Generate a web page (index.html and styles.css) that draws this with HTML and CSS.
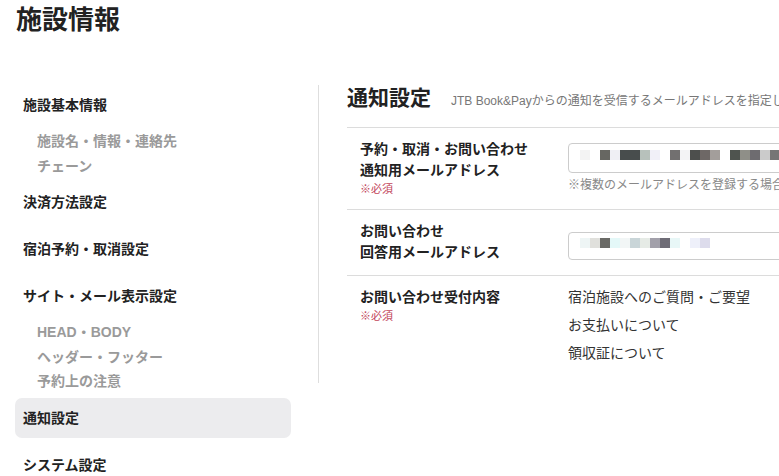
FILE: index.html
```html
<!DOCTYPE html>
<html lang="ja">
<head>
<meta charset="UTF-8">
<meta name="viewport" content="width=device-width, initial-scale=1.0">
<title>施設情報</title>
<link rel="stylesheet" href="styles.css">
</head>
<body>
  <h1 class="page-title">施設情報</h1>
  <div class="layout">
    <nav class="sidebar">
      <div class="nav-item">施設基本情報</div>
      <ul class="sub-list">
        <li>施設名・情報・連絡先</li>
        <li>チェーン</li>
      </ul>
      <div class="nav-item">決済方法設定</div>
      <div class="nav-item">宿泊予約・取消設定</div>
      <div class="nav-item">サイト・メール表示設定</div>
      <ul class="sub-list">
        <li>HEAD・BODY</li>
        <li>ヘッダー・フッター</li>
        <li>予約上の注意</li>
      </ul>
      <div class="nav-item active">通知設定</div>
      <div class="nav-item">システム設定</div>
    </nav>

    <main class="content">
      <div class="content-head">
        <h2>通知設定</h2>
        <p>JTB Book&amp;Payからの通知を受信するメールアドレスを指定してください。</p>
      </div>

      <div class="form-row">
        <div class="row-label">
          予約・取消・お問い合わせ<br>通知用メールアドレス
          <span class="required">※必須</span>
        </div>
        <div class="row-field">
          <div class="email-box first">
            <!-- 伏せ字（モザイク） -->
            <svg width="400" height="28" viewBox="0 0 400 28">
              <rect x="11" y="6" width="10" height="10" fill="#f3f3f3"/>
              <rect x="31" y="6" width="10" height="10" fill="#676762"/>
              <rect x="41" y="6" width="10" height="10" fill="#efeff4"/>
              <rect x="51" y="6" width="20" height="10" fill="#484d4d"/>
              <rect x="71" y="6" width="10" height="10" fill="#b7c1bb"/>
              <rect x="81" y="6" width="10" height="10" fill="#f1f0f8"/>
              <rect x="101" y="6" width="10" height="10" fill="#727070"/>
              <rect x="111" y="6" width="10" height="10" fill="#f3f3f5"/>
              <rect x="121" y="6" width="10" height="10" fill="#4d4f4d"/>
              <rect x="131" y="6" width="10" height="10" fill="#6e6866"/>
              <rect x="141" y="6" width="10" height="10" fill="#a39e9b"/>
              <rect x="161" y="6" width="10" height="10" fill="#4f544f"/>
              <rect x="171" y="6" width="10" height="10" fill="#8f8f88"/>
              <rect x="181" y="6" width="10" height="10" fill="#6e6c70"/>
              <rect x="191" y="6" width="10" height="10" fill="#cbcbcb"/>
              <rect x="201" y="6" width="10" height="10" fill="#767676"/>
            </svg>
          </div>
          <p class="note">※複数のメールアドレスを登録する場合は、カンマ区切りで入力してください。</p>
        </div>
      </div>

      <div class="form-row">
        <div class="row-label">
          お問い合わせ<br>回答用メールアドレス
        </div>
        <div class="row-field">
          <div class="email-box second">
            <svg width="400" height="26" viewBox="0 0 400 26">
              <rect x="11" y="5" width="10" height="10" fill="#eef5f5"/>
              <rect x="21" y="5" width="10" height="10" fill="#e0e0dc"/>
              <rect x="31" y="5" width="10" height="10" fill="#6a6a66"/>
              <rect x="41" y="5" width="10" height="10" fill="#e4f8f8"/>
              <rect x="51" y="5" width="10" height="10" fill="#f2f6f6"/>
              <rect x="61" y="5" width="10" height="10" fill="#c9d5d8"/>
              <rect x="71" y="5" width="10" height="10" fill="#e6ebe6"/>
              <rect x="81" y="5" width="10" height="10" fill="#a2a0aa"/>
              <rect x="91" y="5" width="10" height="10" fill="#6e6c76"/>
              <rect x="101" y="5" width="10" height="10" fill="#e8f7f7"/>
              <rect x="121" y="5" width="10" height="10" fill="#eef0fa"/>
              <rect x="131" y="5" width="10" height="10" fill="#dddcec"/>
            </svg>
          </div>
        </div>
      </div>

      <div class="form-row">
        <div class="row-label">
          お問い合わせ受付内容
          <span class="required">※必須</span>
        </div>
        <ul class="option-list">
          <li>宿泊施設へのご質問・ご要望</li>
          <li>お支払いについて</li>
          <li>領収証について</li>
        </ul>
      </div>
    </main>
  </div>
</body>
</html>
```

FILE: styles.css
```css
html, body {
  overflow: hidden;
}
body {
  margin: 0;
  font-family: "Liberation Sans", "Noto Sans CJK JP", sans-serif;
  color: #222;
  background-color: #fff;
}
.page-title {
  margin: 0 0 45px;
  padding-left: 16px;
  font-size: 26px;
  line-height: 40px;
  font-weight: bold;
  color: #222;
}
.layout {
  display: flex;
  align-items: flex-start;
  width: 1200px;
}

/* サイドメニュー */
.sidebar {
  width: 276px;
  margin-left: 15px;
  flex-shrink: 0;
}
.nav-item {
  height: 40px;
  line-height: 40px;
  padding: 0 8px;
  font-size: 14px;
  font-weight: bold;
  border-radius: 7px;
  margin-bottom: 7px;
}
.nav-item:last-child {
  margin-bottom: 0;
}
.nav-item.active {
  background-color: #ececee;
}
.sub-list {
  list-style: none;
  margin: -3px 0 4px;
  padding: 0 0 0 22px;
  font-size: 14px;
  line-height: 24.5px;
  font-weight: bold;
  color: #9a9a9a;
}

/* 右側 */
.content {
  flex: 1;
  margin-left: 27px;
  border-left: 1px solid #dedede;
  padding: 0 0 4px 28px;
}
.content-head {
  display: flex;
  align-items: baseline;
  height: 26px;
  margin-bottom: 16px;
}
.content-head h2 {
  margin: 0 20px 0 0;
  font-size: 21px;
  line-height: 26px;
  font-weight: bold;
}
.content-head p {
  margin: 0;
  font-size: 12px;
  color: #777;
  white-space: nowrap;
}
.form-row {
  display: flex;
  align-items: flex-start;
  border-top: 1px solid #dcdcdc;
  padding: 11px 0 12px 13px;
}
.row-label {
  width: 208px;
  flex-shrink: 0;
  font-size: 14px;
  line-height: 21px;
  font-weight: bold;
}
.required {
  display: block;
  font-size: 11px;
  line-height: 16px;
  font-weight: normal;
  color: #c2455a;
}
.row-field {
  width: 500px;
}
.email-box {
  border: 1px solid #ccc;
  border-radius: 4px;
  background-color: #fff;
}
.email-box svg {
  display: block;
}
.email-box.first {
  height: 28px;
  margin-top: 4px;
}
.email-box.second {
  height: 26px;
  margin-top: 11px;
}
.note {
  margin: 4px 0 0;
  font-size: 12px;
  line-height: 16px;
  color: #888;
  white-space: nowrap;
}
.option-list {
  list-style: none;
  margin: -4px 0 0;
  padding: 0;
  font-size: 14px;
  line-height: 28px;
  color: #333;
}
```
